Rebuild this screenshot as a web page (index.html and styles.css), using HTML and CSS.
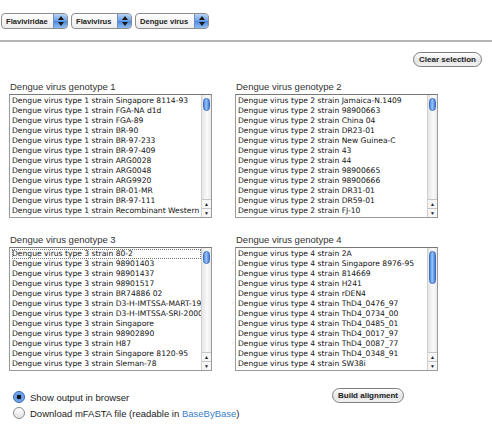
FILE: index.html
```html
<!DOCTYPE html>
<html lang="en">
<head>
    <meta charset="UTF-8">
    <title>Dengue virus alignment</title>
    <link rel="stylesheet" href="styles.css">
</head>
<body>
    <div class="taxa">
        <span class="popup w1">Flaviviridae<span class="stepper"><svg viewBox="0 0 8 12" width="8" height="12"><path d="M4 1 L7 5 L1 5 Z M4 11 L7 7 L1 7 Z" fill="#1a1a1a"/></svg></span></span>
        <span class="popup w2">Flavivirus<span class="stepper"><svg viewBox="0 0 8 12" width="8" height="12"><path d="M4 1 L7 5 L1 5 Z M4 11 L7 7 L1 7 Z" fill="#1a1a1a"/></svg></span></span>
        <span class="popup w3">Dengue virus<span class="stepper"><svg viewBox="0 0 8 12" width="8" height="12"><path d="M4 1 L7 5 L1 5 Z M4 11 L7 7 L1 7 Z" fill="#1a1a1a"/></svg></span></span>
    </div>

    <div class="rule"></div>

    <div class="actions">
        <button class="pill">Clear selection</button>
    </div>

    <div class="groups">
        <div class="group">
            <div class="group-title">Dengue virus genotype 1</div>
            <div class="listbox">
                <ul class="options">
                    <li>Dengue virus type 1 strain Singapore 8114-93</li>
                    <li>Dengue virus type 1 strain FGA-NA d1d</li>
                    <li>Dengue virus type 1 strain FGA-89</li>
                    <li>Dengue virus type 1 strain BR-90</li>
                    <li>Dengue virus type 1 strain BR-97-233</li>
                    <li>Dengue virus type 1 strain BR-97-409</li>
                    <li>Dengue virus type 1 strain ARG0028</li>
                    <li>Dengue virus type 1 strain ARG0048</li>
                    <li>Dengue virus type 1 strain ARG9920</li>
                    <li>Dengue virus type 1 strain BR-01-MR</li>
                    <li>Dengue virus type 1 strain BR-97-111</li>
                    <li>Dengue virus type 1 strain Recombinant Western</li>
                </ul>
                <div class="scroll">
                    <div class="track"><div class="thumb short"></div></div>
                    <div class="step">&#9650;</div>
                    <div class="step">&#9660;</div>
                </div>
            </div>
        </div>

        <div class="group">
            <div class="group-title">Dengue virus genotype 2</div>
            <div class="listbox">
                <ul class="options">
                    <li>Dengue virus type 2 strain Jamaica-N.1409</li>
                    <li>Dengue virus type 2 strain 98900663</li>
                    <li>Dengue virus type 2 strain China 04</li>
                    <li>Dengue virus type 2 strain DR23-01</li>
                    <li>Dengue virus type 2 strain New Guinea-C</li>
                    <li>Dengue virus type 2 strain 43</li>
                    <li>Dengue virus type 2 strain 44</li>
                    <li>Dengue virus type 2 strain 98900665</li>
                    <li>Dengue virus type 2 strain 98900666</li>
                    <li>Dengue virus type 2 strain DR31-01</li>
                    <li>Dengue virus type 2 strain DR59-01</li>
                    <li>Dengue virus type 2 strain FJ-10</li>
                </ul>
                <div class="scroll">
                    <div class="track"><div class="thumb short"></div></div>
                    <div class="step">&#9650;</div>
                    <div class="step">&#9660;</div>
                </div>
            </div>
        </div>

        <div class="group">
            <div class="group-title">Dengue virus genotype 3</div>
            <div class="listbox">
                <ul class="options">
                    <li class="focused">Dengue virus type 3 strain 80-2</li>
                    <li>Dengue virus type 3 strain 98901403</li>
                    <li>Dengue virus type 3 strain 98901437</li>
                    <li>Dengue virus type 3 strain 98901517</li>
                    <li>Dengue virus type 3 strain BR74886 02</li>
                    <li>Dengue virus type 3 strain D3-H-IMTSSA-MART-1999</li>
                    <li>Dengue virus type 3 strain D3-H-IMTSSA-SRI-2000</li>
                    <li>Dengue virus type 3 strain Singapore</li>
                    <li>Dengue virus type 3 strain 98902890</li>
                    <li>Dengue virus type 3 strain H87</li>
                    <li>Dengue virus type 3 strain Singapore 8120-95</li>
                    <li>Dengue virus type 3 strain Sleman-78</li>
                </ul>
                <div class="scroll">
                    <div class="track"><div class="thumb short"></div></div>
                    <div class="step">&#9650;</div>
                    <div class="step">&#9660;</div>
                </div>
            </div>
        </div>

        <div class="group">
            <div class="group-title">Dengue virus genotype 4</div>
            <div class="listbox">
                <ul class="options">
                    <li>Dengue virus type 4 strain 2A</li>
                    <li>Dengue virus type 4 strain Singapore 8976-95</li>
                    <li>Dengue virus type 4 strain 814669</li>
                    <li>Dengue virus type 4 strain H241</li>
                    <li>Dengue virus type 4 strain rDEN4</li>
                    <li>Dengue virus type 4 strain ThD4_0476_97</li>
                    <li>Dengue virus type 4 strain ThD4_0734_00</li>
                    <li>Dengue virus type 4 strain ThD4_0485_01</li>
                    <li>Dengue virus type 4 strain ThD4_0017_97</li>
                    <li>Dengue virus type 4 strain ThD4_0087_77</li>
                    <li>Dengue virus type 4 strain ThD4_0348_91</li>
                    <li>Dengue virus type 4 strain SW38i</li>
                </ul>
                <div class="scroll">
                    <div class="track"><div class="thumb long"></div></div>
                    <div class="step">&#9650;</div>
                    <div class="step">&#9660;</div>
                </div>
            </div>
        </div>
    </div>

    <div class="output">
        <div class="choices">
            <label class="choice"><span class="radio checked"></span><span>Show output in browser</span></label>
            <label class="choice"><span class="radio"></span><span>Download mFASTA file (readable in <a href="#">BaseByBase</a>)</span></label>
        </div>
        <button class="pill build">Build alignment</button>
    </div>
</body>
</html>
```

FILE: styles.css
```css
body {
    margin: 0;
    font-family: "Liberation Sans", Arial, sans-serif;
    font-size: 10px;
    color: #222;
    background: #fff;
}
.taxa {
    display: flex;
    gap: 3px;
    padding: 13px 0 0 1px;
    height: 17px;
}
.popup {
    display: flex;
    align-items: center;
    justify-content: space-between;
    box-sizing: border-box;
    height: 16px;
    padding-left: 4px;
    border: 1px solid #8d8d8d;
    border-radius: 4px;
    background: linear-gradient(#fff, #ececec);
    font-family: "Liberation Sans", Arial, sans-serif;
    font-weight: bold;
    font-size: 7.6px;
    color: #222;
    white-space: nowrap;
    overflow: hidden;
}
.w1 { width: 67px; }
.w2 { width: 61px; }
.w3 { width: 74px; }
.stepper {
    display: flex;
    align-items: center;
    justify-content: center;
    flex-shrink: 0;
    width: 13px;
    height: 100%;
    margin-left: 3px;
    border-left: 1px solid #6b8fc4;
    background: linear-gradient(#b9d4f5, #6aa0e6 50%, #4b86dc 51%, #8fbdf3);
}
.rule {
    margin-top: 10px;
    border-top: 2px solid #b5b5b5;
}
.actions {
    display: flex;
    justify-content: flex-end;
    padding: 10px 10px 0 0;
}
.pill {
    box-sizing: border-box;
    height: 15px;
    padding: 0 5px;
    border: 1px solid #7c7c7c;
    border-radius: 8px;
    background: linear-gradient(#fff, #e4e4e4 60%, #f2f2f2);
    font-family: "Liberation Sans", Arial, sans-serif;
    font-weight: bold;
    font-size: 8px;
    color: #222;
    line-height: 13px;
}
.groups {
    display: grid;
    grid-template-columns: 203px 203px;
    column-gap: 23px;
    row-gap: 16px;
    padding: 14px 0 0 9px;
}
.group-title {
    height: 13px;
    font-size: 9.5px;
    color: #333;
    padding-left: 1px;
}
.listbox {
    display: flex;
    box-sizing: border-box;
    height: 124px;
    border: 1px solid #9a9a9a;
    border-top-color: #777;
    background: #fff;
}
.options {
    flex: 1;
    list-style: none;
    margin: 0;
    padding: 1px 0 0 2px;
    overflow: hidden;
    font-family: "DejaVu Sans", sans-serif;
    font-size: 7.6px;
    color: #111;
}
.options li {
    height: 10px;
    line-height: 10px;
    white-space: nowrap;
}
.options .focused {
    outline: 1px dotted #777;
    outline-offset: -1px;
}
.scroll {
    display: flex;
    flex-direction: column;
    flex-shrink: 0;
    width: 9px;
    border-left: 1px solid #d0d0d0;
    background: linear-gradient(90deg, #e6e6e6, #fafafa 60%, #e9e9e9);
}
.track {
    flex: 1;
    padding-top: 3px;
}
.thumb {
    margin: 0 1px;
    border-radius: 4px;
    border: 1px solid #3a6fc0;
    background: linear-gradient(90deg, #4e8ae0, #9cc4f6 45%, #3f7cd8);
}
.thumb.short { height: 11px; }
.thumb.long { height: 31px; }
.step {
    height: 8px;
    border-top: 1px solid #c6c6c6;
    font-size: 5px;
    line-height: 8px;
    text-align: center;
    color: #222;
    background: #f6f6f6;
}
.output {
    display: flex;
    align-items: flex-start;
    padding: 17px 0 0 13px;
}
.choices {
    display: flex;
    flex-direction: column;
    gap: 4px;
    width: 319px;
    padding-top: 3px;
}
.choice {
    display: flex;
    align-items: center;
    font-size: 9.5px;
    color: #222;
}
.radio {
    box-sizing: border-box;
    width: 12px;
    height: 12px;
    margin-right: 5px;
    border: 1px solid #8a8a8a;
    border-radius: 50%;
    background: linear-gradient(#fff, #e2e2e2);
}
.radio.checked {
    border-color: #2f62b4;
    background: radial-gradient(circle, #111 0 2px, #5b93e3 2.5px, #9fc6f4);
}
.choice a {
    color: #3a80c8;
    text-decoration: none;
}
.build {
    margin-top: 0;
}
```
